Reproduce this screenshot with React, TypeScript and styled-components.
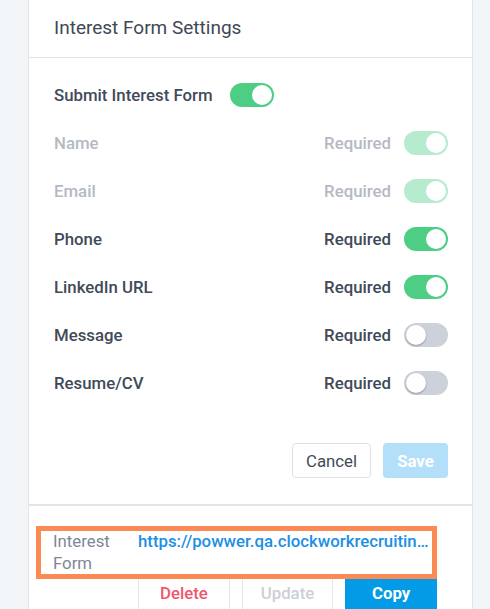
import React from "react";
import styled, { createGlobalStyle, css } from "styled-components";

const Global = createGlobalStyle`
  html, body { margin: 0; padding: 0; background: #f3f6f9; }
  body { font-family: Roboto, "Liberation Sans", sans-serif; }
  * { box-sizing: border-box; }
`;

const Page = styled.div`
  width: 490px;
  height: 609px;
  overflow: hidden;
  padding-left: 28px;
`;

const Panel = styled.section`
  width: 445px;
  background: #fff;
  border-left: 1px solid #e1e4e8;
  border-right: 1px solid #e1e4e8;
`;

const Header = styled.div`
  height: 58px;
  display: flex;
  align-items: center;
  padding: 0 24px 2px 25px;
  border-bottom: 1px solid #e1e4e8;
  font-size: 19px;
  font-weight: 400;
  color: #3f4856;
`;

const Body = styled.div`
  padding: 25px 24px 26px 25px;
  display: flex;
  flex-direction: column;
  border-bottom: 2px solid #e1e4e8;
`;

const Fields = styled.div`
  display: flex;
  flex-direction: column;
  gap: 24px;
`;

const Row = styled.div<{ $dim?: boolean }>`
  display: flex;
  align-items: center;
  height: 24px;
  font-size: 16.8px;
  font-weight: 500;
  color: ${(p) => (p.$dim ? "#b4bac3" : "#414a59")};
`;

const Label = styled.span`
  flex: 1;
`;

const MasterLabel = styled.span`
  margin-right: 17px;
`;

const ReqLabel = styled.span`
  margin-right: 13px;
`;

const Toggle = styled.span<{ $on: boolean; $dim?: boolean }>`
  position: relative;
  display: inline-block;
  width: 44px;
  height: 24px;
  border-radius: 12px;
  background: ${(p) => (p.$on ? (p.$dim ? "#b6ebcf" : "#4ecd84") : "#cdd2da")};
  &::after {
    content: "";
    position: absolute;
    top: 2px;
    ${(p) => (p.$on ? css`right: 2px;` : css`left: 2px;`)}
    width: 20px;
    height: 20px;
    border-radius: 50%;
    background: #fff;
    box-shadow: ${(p) => (p.$on ? "none" : "0 1px 2px rgba(0,0,0,0.3)")};
  }
`;

const Actions = styled.div`
  display: flex;
  justify-content: flex-end;
  gap: 12px;
  margin-top: 48px;
`;

const Btn = styled.button<{ $variant: "outline" | "primary-disabled" }>`
  height: 35px;
  border-radius: 4px;
  font-family: Roboto, "Liberation Sans", sans-serif;
  font-size: 16.8px;
  padding: 0;
  cursor: pointer;
  ${(p) =>
    p.$variant === "outline"
      ? css`
          width: 79px;
          background: #fff;
          border: 1px solid #dde1e6;
          color: #404957;
          font-weight: 400;
        `
      : css`
          width: 65px;
          background: #b3dffa;
          border: none;
          color: #fff;
          font-weight: 700;
        `}
`;

const LinkSection = styled.div`
  padding: 20px 35px 0 7px;
`;

const InfoBox = styled.div`
  display: flex;
  border: 5px solid #fb8b55;
  padding: 0 0 0 12px;
  font-size: 16.8px;
  line-height: 21.5px;
`;

const InfoLabel = styled.span`
  width: 85px;
  flex-shrink: 0;
  color: #7d8796;
`;

const InfoUrl = styled.span`
  flex: 1;
  min-width: 0;
  color: #1b8fe6;
  font-weight: 500;
  white-space: nowrap;
  overflow: hidden;
`;

const LinkButtons = styled.div`
  display: flex;
  gap: 12px;
  margin-left: 102px;
`;

const LinkBtn = styled.button<{ $kind: "delete" | "update" | "copy" }>`
  width: 92px;
  height: 40px;
  border-radius: 0 0 4px 4px;
  font-family: Roboto, "Liberation Sans", sans-serif;
  font-size: 16.8px;
  line-height: 22px;
  font-weight: 500;
  padding: 3px 0 0;
  display: flex;
  justify-content: center;
  align-items: flex-start;
  ${(p) =>
    p.$kind === "copy"
      ? css`
          background: #039be5;
          border: none;
          color: #fff;
          font-weight: 700;
        `
      : css`
          background: #fff;
          border: 1px solid #e3e6ea;
          border-top: none;
          color: ${p.$kind === "delete" ? "#f2556f" : "#cbd0d7"};
        `}
`;

const fields = [
  { name: "Name", on: true, dim: true },
  { name: "Email", on: true, dim: true },
  { name: "Phone", on: true },
  { name: "LinkedIn URL", on: true },
  { name: "Message", on: false },
  { name: "Resume/CV", on: false },
];

export default function App() {
  return (
    <Page>
      <Global />
      <Panel>
        <Header>Interest Form Settings</Header>
        <Body>
          <Fields>
            <Row>
              <MasterLabel>Submit Interest Form</MasterLabel>
              <Toggle $on />
            </Row>
            {fields.map((f) => (
              <Row key={f.name} $dim={f.dim}>
                <Label>{f.name}</Label>
                <ReqLabel>Required</ReqLabel>
                <Toggle $on={f.on} $dim={f.dim} />
              </Row>
            ))}
          </Fields>
          <Actions>
            <Btn $variant="outline">Cancel</Btn>
            <Btn $variant="primary-disabled">Save</Btn>
          </Actions>
        </Body>
        <LinkSection>
          <InfoBox>
            <InfoLabel>
              Interest
              <br />
              Form
            </InfoLabel>
            <InfoUrl>https://powwer.qa.clockworkrecruitin…</InfoUrl>
          </InfoBox>
          <LinkButtons>
            <LinkBtn $kind="delete">Delete</LinkBtn>
            <LinkBtn $kind="update">Update</LinkBtn>
            <LinkBtn $kind="copy">Copy</LinkBtn>
          </LinkButtons>
        </LinkSection>
      </Panel>
    </Page>
  );
}
